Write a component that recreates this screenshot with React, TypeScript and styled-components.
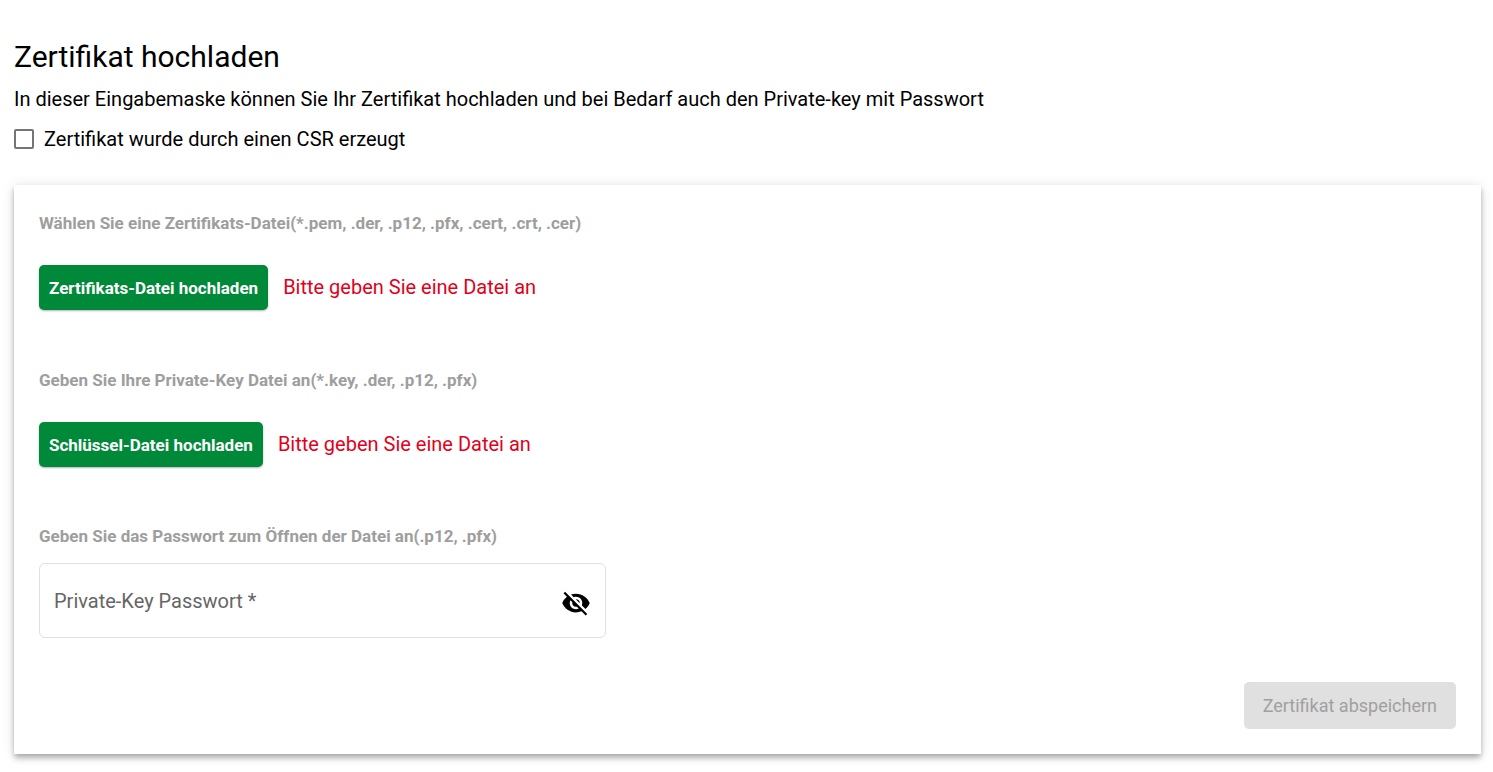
import React, { useState } from 'react';
import styled, { createGlobalStyle } from 'styled-components';
import { MdVisibility, MdVisibilityOff } from 'react-icons/md';

const GlobalStyle = createGlobalStyle`
  *, *::before, *::after { box-sizing: border-box; }
  body {
    margin: 0;
    background: #fff;
    color: #000;
    font-family: Roboto, "Liberation Sans", sans-serif;
    font-size: 20px;
    line-height: 30px;
  }
`;

const Page = styled.main`
  padding: 37px 12px 18px 14px;
`;

const Title = styled.h1`
  margin: 0 0 7px;
  font-size: 30px;
  font-weight: 400;
  line-height: 40px;
`;

const Intro = styled.p`
  margin: 0;
`;

const CheckRow = styled.label`
  display: flex;
  align-items: center;
  gap: 10px;
  margin-top: 10px;
`;

const Checkbox = styled.input`
  appearance: none;
  width: 20px;
  height: 20px;
  margin: 0;
  border: 2px solid #757575;
  border-radius: 2px;
  background: #fff;

  &:checked {
    border-color: #008939;
    background: #008939;
  }
`;

const Card = styled.form`
  display: flex;
  flex-direction: column;
  margin-top: 31px;
  padding: 23px 25px 25px;
  background: #fff;
  box-shadow: 0 3px 5px -1px rgba(0, 0, 0, 0.2), 0 5px 6px rgba(0, 0, 0, 0.14), 0 1px 12px rgba(0, 0, 0, 0.12);
`;

const FieldLabel = styled.label`
  font-size: 17px;
  font-weight: 700;
  color: #9e9e9e;
`;

const UploadSection = styled.section`
  display: flex;
  flex-direction: column;
  margin-bottom: 55px;

  &:last-of-type {
    margin-bottom: 54px;
  }
`;

const UploadRow = styled.div`
  display: flex;
  align-items: center;
  gap: 15px;
  margin-top: 27px;
`;

const Button = styled.button`
  height: 45px;
  padding: 0 10px;
  border: 0;
  border-radius: 5px;
  background: #008939;
  color: #fff;
  font-family: inherit;
  font-size: 17px;
  font-weight: 700;
  box-shadow: 0 1px 2px rgba(0, 0, 0, 0.3);
`;

const SaveButton = styled(Button)`
  align-self: flex-end;
  height: 47px;
  margin-top: 44px;
  padding: 0 19px;
  font-size: 18px;
  font-weight: 400;

  &:disabled {
    background: #e0e0e0;
    color: #a0a0a0;
    box-shadow: none;
  }
`;

const ErrorText = styled.span`
  padding-bottom: 2px;
  color: #e2001a;
`;

const PasswordBox = styled.div`
  display: flex;
  align-items: center;
  width: 100%;
  max-width: 567px;
  height: 75px;
  margin-top: 12px;
  padding: 0 14px;
  border: 1px solid #e0e0e0;
  border-radius: 6px;
`;

const PasswordInput = styled.input`
  flex: 1;
  min-width: 0;
  padding: 0;
  border: 0;
  outline: 0;
  background: transparent;
  font: inherit;

  &::placeholder {
    color: #666;
    opacity: 1;
  }
`;

const IconButton = styled.button`
  display: flex;
  padding: 4px 0 0;
  border: 0;
  background: none;
  color: #000;
`;

type UploadProps = { id: string; label: string; action: string };

function Upload({ id, label, action }: UploadProps) {
  return (
    <UploadSection>
      <FieldLabel htmlFor={id}>{label}</FieldLabel>
      <UploadRow>
        <Button id={id} type="button">{action}</Button>
        <ErrorText>Bitte geben Sie eine Datei an</ErrorText>
      </UploadRow>
    </UploadSection>
  );
}

export default function App() {
  const [visible, setVisible] = useState(false);
  return (
    <>
      <GlobalStyle />
      <Page>
        <Title>Zertifikat hochladen</Title>
        <Intro>In dieser Eingabemaske können Sie Ihr Zertifikat hochladen und bei Bedarf auch den Private-key mit Passwort</Intro>
        <CheckRow>
          <Checkbox type="checkbox" />
          Zertifikat wurde durch einen CSR erzeugt
        </CheckRow>
        <Card>
          <Upload
            id="certificate"
            label="Wählen Sie eine Zertifikats-Datei(*.pem, .der, .p12, .pfx, .cert, .crt, .cer)"
            action="Zertifikats-Datei hochladen"
          />
          <Upload
            id="private-key"
            label="Geben Sie Ihre Private-Key Datei an(*.key, .der, .p12, .pfx)"
            action="Schlüssel-Datei hochladen"
          />
          <FieldLabel htmlFor="password">Geben Sie das Passwort zum Öffnen der Datei an(.p12, .pfx)</FieldLabel>
          <PasswordBox>
            <PasswordInput id="password" type={visible ? 'text' : 'password'} placeholder="Private-Key Passwort *" />
            <IconButton type="button" aria-label="Passwort anzeigen" onClick={() => setVisible(!visible)}>
              {visible ? <MdVisibility size={30} /> : <MdVisibilityOff size={30} />}
            </IconButton>
          </PasswordBox>
          <SaveButton type="submit" disabled>Zertifikat abspeichern</SaveButton>
        </Card>
      </Page>
    </>
  );
}
